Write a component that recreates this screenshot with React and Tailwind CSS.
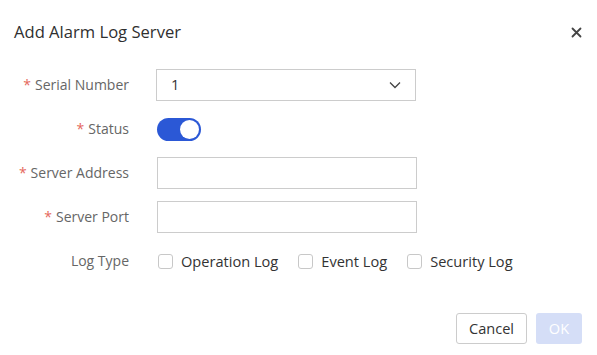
import React from "react";

function Label({ text, required }) {
  return (
    <div className="w-[129px] shrink-0 text-right text-[14px] text-[#666666] leading-none">
      {required && <span className="text-[#e5675c] mr-[4px]">*</span>}
      {text}
    </div>
  );
}

function Checkbox({ label }) {
  return (
    <label className="flex items-center gap-[8px] text-[14.6px] leading-none text-[#333333]">
      <span className="w-[15px] h-[15px] border border-[#c8c8c8] rounded-[3px] bg-white" />
      {label}
    </label>
  );
}

export default function App() {
  return (
    <div className="w-[597px] h-[355px] bg-white relative font-['Open_Sans',sans-serif]">
      <div className="h-[64px] flex items-center justify-between pl-[14px] pr-[14px]">
        <div className="text-[16.6px] text-[#2f2f2f]">Add Alarm Log Server</div>
        <svg width="11" height="11" viewBox="0 0 11 11" className="mr-[1px]">
          <path d="M1.5 1.5L9.5 9.5M9.5 1.5L1.5 9.5" stroke="#444" strokeWidth="1.8" strokeLinecap="round" />
        </svg>
      </div>
      <div className="flex flex-col gap-[12px] mt-[5px]">
        <div className="flex items-center h-[32px]">
          <Label text="Serial Number" required />
          <div className="ml-[27px] w-[260px] h-[32px] border border-[#cccccc] flex items-center justify-between pl-[14px] pr-[14px] text-[14.6px] text-[#333]">
            <span>1</span>
            <svg width="12" height="8" viewBox="0 0 12 8">
              <path d="M1 1.5L6 6.5L11 1.5" stroke="#444" strokeWidth="1.3" fill="none" />
            </svg>
          </div>
        </div>
        <div className="flex items-center h-[32px]">
          <Label text="Status" required />
          <div className="ml-[28px] w-[44px] h-[23px] rounded-full bg-[#2b58d6] flex items-center justify-end pr-[2px]">
            <div className="w-[19px] h-[19px] rounded-full bg-white" />
          </div>
        </div>
        <div className="flex items-center h-[32px]">
          <Label text="Server Address" required />
          <div className="ml-[28px] w-[260px] h-[32px] border border-[#cccccc]" />
        </div>
        <div className="flex items-center h-[32px]">
          <Label text="Server Port" required />
          <div className="ml-[28px] w-[260px] h-[32px] border border-[#cccccc]" />
        </div>
        <div className="flex items-center h-[32px]">
          <Label text="Log Type" />
          <div className="ml-[29px] flex items-center gap-[20px]">
            <Checkbox label="Operation Log" />
            <Checkbox label="Event Log" />
            <Checkbox label="Security Log" />
          </div>
        </div>
      </div>
      <div className="absolute right-[15px] bottom-[11px] flex gap-[9px]">
        <button className="w-[71px] h-[31px] border border-[#cccccc] rounded-[3px] bg-white text-[14.6px] text-[#333]">Cancel</button>
        <button className="w-[46px] h-[31px] rounded-[3px] bg-[#d5def7] text-[14.6px] text-white">OK</button>
      </div>
    </div>
  );
}
